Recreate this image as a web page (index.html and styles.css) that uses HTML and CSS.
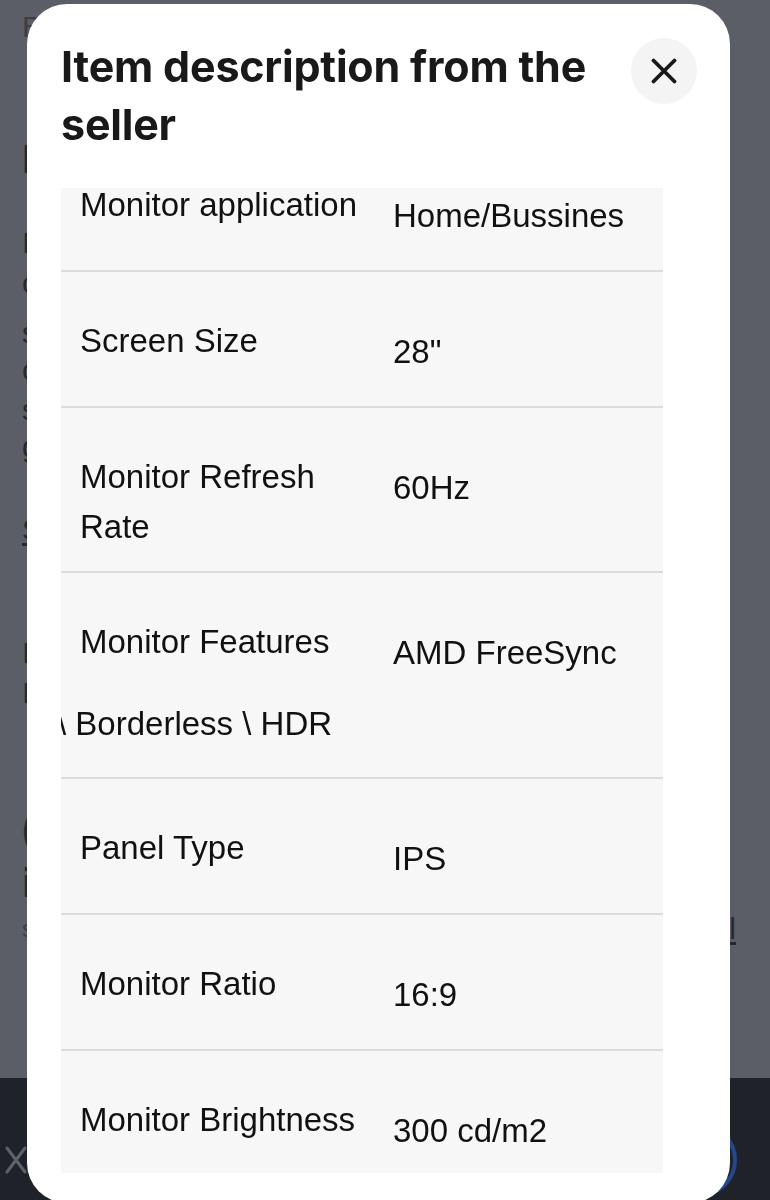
FILE: index.html
```html
<!DOCTYPE html>
<html lang="en">
<head>
<meta charset="utf-8">
<title>Item description from the seller</title>
<link rel="stylesheet" href="styles.css">
</head>
<body>
<div class="page">
  <div class="page-content">
    <p class="bl l1 faint">B</p>
    <h2 class="bl l2 head">I</h2>
    <p class="bl l3">I</p>
    <p class="bl l4">c</p>
    <p class="bl l5">s</p>
    <p class="bl l6">c</p>
    <p class="bl l7">s</p>
    <p class="bl l8">g</p>
    <p class="bl l9 link">S</p>
    <p class="bl l10">I</p>
    <p class="bl l11">I</p>
    <h2 class="bl l12 head">(</h2>
    <h2 class="bl l13 head">i</h2>
    <div class="bl l14 row-split"><span class="faint small">s</span><span class="link">l</span></div>
  </div>
  <div class="app-bar">
    <svg class="bar-close" width="24" height="30" viewBox="0 0 24 30" aria-hidden="true"><path d="M3 3 L21 27 M21 3 L3 27" stroke="#5e6168" stroke-width="3" fill="none" stroke-linecap="round"/></svg>
    <span class="bar-fab"></span>
  </div>
</div>

<div class="modal" role="dialog" aria-label="Item description from the seller">
  <header class="modal-head">
    <h1 class="modal-title">Item description from the seller</h1>
    <button class="modal-close" aria-label="Close">
      <svg width="26" height="26" viewBox="0 0 26 26" aria-hidden="true"><path d="M2.5 2.5 L23.5 23.5 M23.5 2.5 L2.5 23.5" stroke="#191919" stroke-width="3.8" stroke-linecap="round" fill="none"/></svg>
    </button>
  </header>
  <div class="desc-scroll">
    <div class="desc-table">
      <div class="spec-row">
        <div class="spec-label">Monitor application</div>
        <div class="spec-value">Home/Bussines</div>
      </div>
      <div class="spec-row">
        <div class="spec-label">Screen Size</div>
        <div class="spec-value">28"</div>
      </div>
      <div class="spec-row two-line">
        <div class="spec-label">Monitor Refresh Rate</div>
        <div class="spec-value">60Hz</div>
      </div>
      <div class="spec-row features">
        <div class="spec-label">Monitor Features<span class="spec-overflow">\ Borderless \ HDR</span></div>
        <div class="spec-value">AMD FreeSync</div>
      </div>
      <div class="spec-row">
        <div class="spec-label">Panel Type</div>
        <div class="spec-value">IPS</div>
      </div>
      <div class="spec-row">
        <div class="spec-label">Monitor Ratio</div>
        <div class="spec-value">16:9</div>
      </div>
      <div class="spec-row">
        <div class="spec-label">Monitor Brightness</div>
        <div class="spec-value">300 cd/m2</div>
      </div>
    </div>
  </div>
</div>
</body>
</html>
```
FILE: styles.css
```css
html, body {
  margin: 0;
  padding: 0;
}

body {
  width: 770px;
  height: 1200px;
  overflow: hidden;
  background: #5b5e66;
  font-family: "Liberation Sans", Arial, sans-serif;
}

/* ---------- dimmed page behind the dialog ---------- */
.page {
  display: flex;
  flex-direction: column;
  height: 1200px;
}

.page-content {
  height: 1078px;
  padding-left: 22px;
  box-sizing: border-box;
  overflow: hidden;
}

.bl {
  margin: 0;
  height: 30px;
  font-size: 30px;
  line-height: 30px;
  font-weight: 400;
  color: #27292e;
  white-space: nowrap;
}

.bl.head {
  font-size: 40px;
  font-weight: 700;
}

.faint { color: #3b3e44; }
.small { font-size: 24px; }
.link { text-decoration: underline; text-underline-offset: 3px; }

.row-split {
  display: flex;
  justify-content: space-between;
  padding-right: 34px;
}

.l1 { margin-top: 12px; }
.l2 { margin-top: 102px; }
.l3 { margin-top: 54px; }
.l4 { margin-top: 10px; }
.l5 { margin-top: 20px; }
.l6 { margin-top: 7px; }
.l7 { margin-top: 10px; }
.l8 { margin-top: 7px; }
.l9 { margin-top: 53px; }
.l10 { margin-top: 93px; }
.l11 { margin-top: 10px; }
.l12 { margin-top: 106px; }
.l13 { margin-top: 24px; }
.l14 { margin-top: 16px; }

.app-bar {
  height: 122px;
  background: #1f2229;
  display: flex;
  justify-content: space-between;
  align-items: flex-start;
}

.bar-close {
  margin: 67px 0 0 4px;
}

.bar-fab {
  width: 74px;
  height: 74px;
  box-sizing: border-box;
  margin: 45px 33px 0 0;
  border-radius: 50%;
  border: 4px solid #25488a;
  background: #1f2229;
}

/* ---------- dialog ---------- */
.modal {
  position: fixed;
  top: 4px;
  left: 27px;
  width: 703px;
  height: 1199px;
  background: #ffffff;
  border-radius: 40px;
  display: flex;
  flex-direction: column;
  overflow: hidden;
}

.modal-head {
  display: flex;
  justify-content: space-between;
  align-items: flex-start;
  padding: 33px 33px 35px 34px;
}

.modal-title {
  margin: 0;
  font-family: Inter, "Liberation Sans", sans-serif;
  font-size: 43px;
  line-height: 58px;
  font-weight: 700;
  color: #191919;
  letter-spacing: -0.2px;
}

.modal-close {
  flex-shrink: 0;
  width: 66px;
  height: 66px;
  margin-top: 1px;
  padding: 0;
  border: 0;
  border-radius: 50%;
  background: #f4f4f4;
  display: grid;
  place-items: center;
}

.desc-scroll {
  margin-left: 34px;
  width: 602px;
  height: 985px;
  overflow: hidden;
  background: #f7f7f7;
}

.desc-table {
  margin-top: -52px;
}

.spec-row {
  display: grid;
  grid-template-columns: 332px 1fr;
  height: 134px;
  border-bottom: 2px solid #dcdcdc;
  font-family: "Liberation Sans", Arial, sans-serif;
  font-size: 33px;
  line-height: 50px;
  color: #111111;
}

.spec-row.two-line { height: 163px; }
.spec-row.features { height: 204px; }

.spec-label {
  padding: 44px 0 0 19px;
}

.spec-value {
  padding-top: 55px;
  white-space: nowrap;
}

.spec-overflow {
  display: block;
  margin: 32px 0 0 -23px;
  white-space: nowrap;
}
```
